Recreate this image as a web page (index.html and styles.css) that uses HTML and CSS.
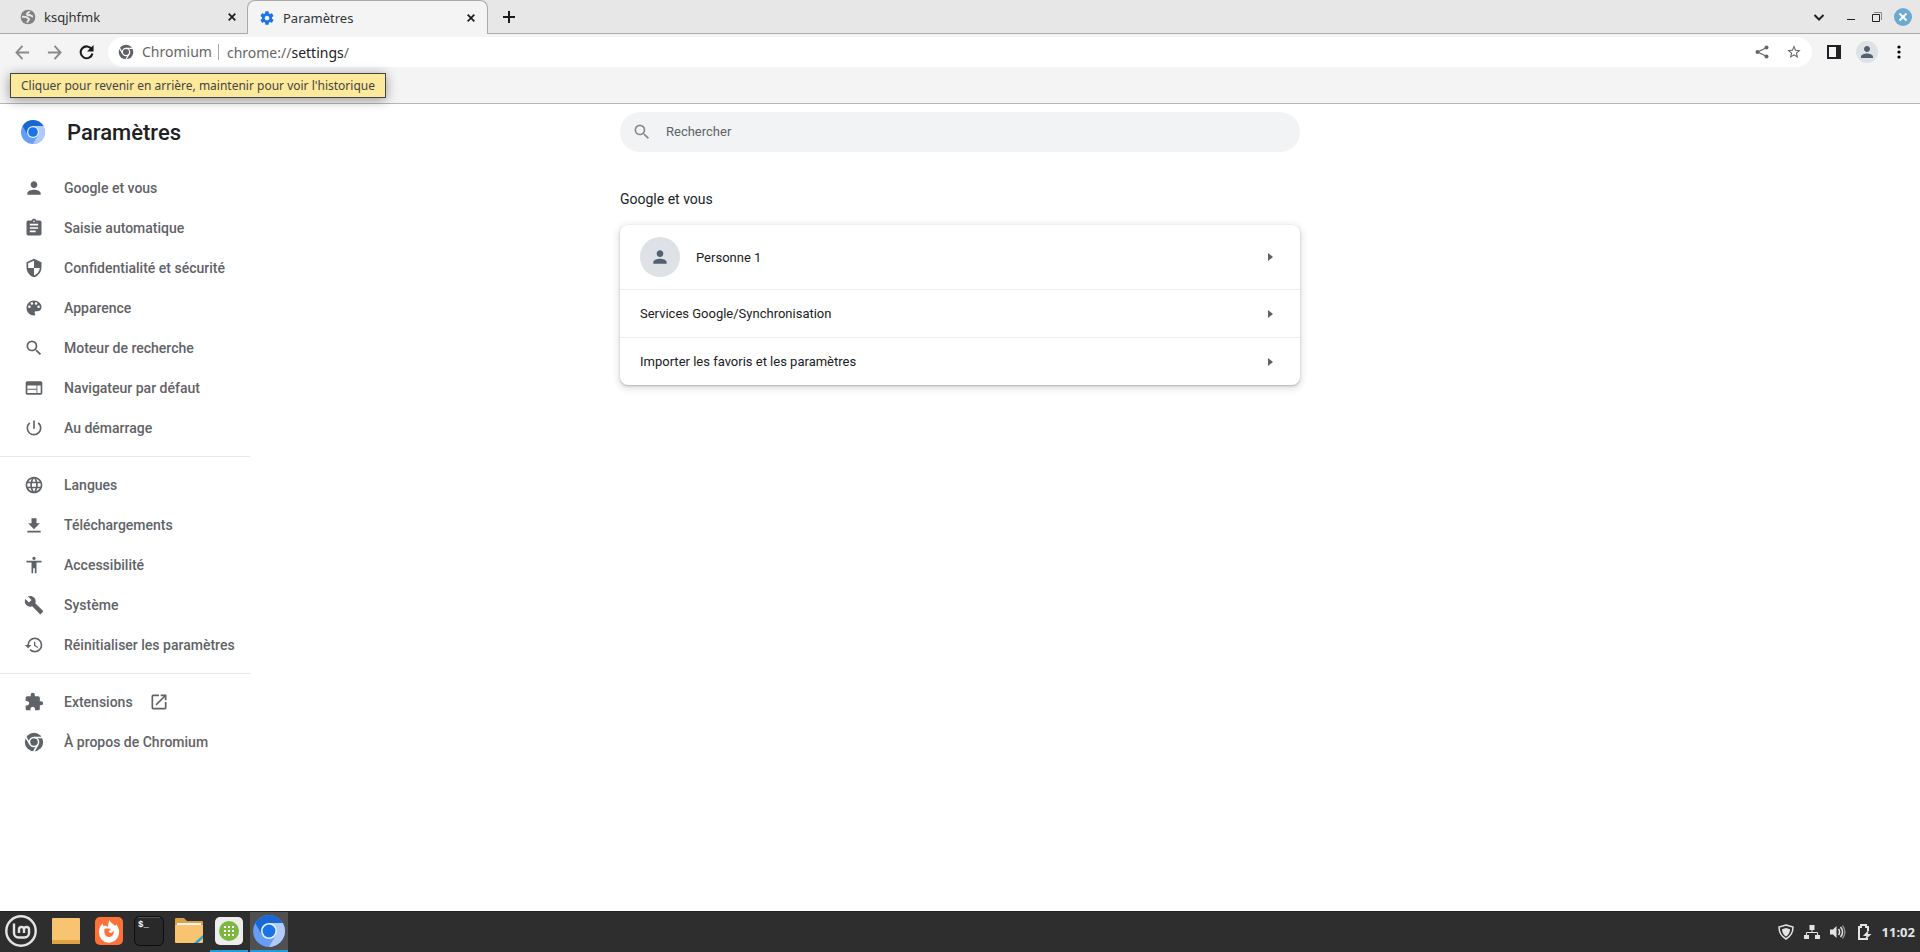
FILE: index.html
```html
<!DOCTYPE html>
<html lang="fr">
<head>
    <meta charset="UTF-8">
    <meta name="viewport" content="width=device-width, initial-scale=1.0">
    <title>Paramètres</title>
    <link rel="stylesheet" href="styles.css">
</head>
<body>

    <!-- shared icons -->
    <svg class="sprite" aria-hidden="true">
        <symbol id="i-close" viewBox="0 0 24 24"><path d="M4 4l16 16M20 4L4 20" fill="none" stroke="currentColor" stroke-width="4"/></symbol>
        <symbol id="i-person" viewBox="0 0 24 24"><path d="M12 12c2.210 0 4-1.790 4-4s-1.790-4-4-4-4 1.790-4 4 1.790 4 4 4zm0 2c-2.670 0-8 1.340-8 4v2h16v-2c0-2.660-5.330-4-8-4z"/></symbol>
        <symbol id="i-search" viewBox="0 0 24 24"><path d="M15.500 14h-.79l-.28-.27A6.470 6.470 0 0 0 16 9.500 6.500 6.500 0 1 0 9.500 16c1.610 0 3.090-.59 4.230-1.570l.27.28v.79l5 4.990L20.490 19l-4.990-5zm-6 0C7.010 14 5 11.990 5 9.500S7.010 5 9.500 5 14 7.010 14 9.500 11.990 14 9.500 14z"/></symbol>
        <symbol id="i-chrome" viewBox="0 0 24 24">
            <circle cx="12" cy="12" r="11"/>
            <circle cx="12" cy="12" r="5.500" fill="none" stroke="#fff" stroke-width="1.800"/>
            <path d="M12 6.500h10.500M7.200 14.700L2 5.800M16.800 14.700l-5.200 9" fill="none" stroke="#fff" stroke-width="1.800"/>
        </symbol>
        <symbol id="i-chromium" viewBox="0 0 24 24">
            <circle cx="12" cy="12" r="12" fill="#669df6"/>
            <path d="M12 6h10.390A12 12 0 0 1 12 24l5.200-9z" fill="#aecbfa"/>
            <path d="M1.610 6A12 12 0 0 1 22.390 6H12l-5.200 9z" fill="#1967d2"/>
            <circle cx="12" cy="12" r="6" fill="#e8f0fe"/>
            <circle cx="12" cy="12" r="4.800" fill="#1a73e8"/>
        </symbol>
    </svg>

    <header class="browser">
        <div class="tab-strip">
            <div class="tab">
                <svg class="favicon" viewBox="0 0 24 24"><circle cx="12" cy="12" r="11" fill="#808080"/><path d="M14 3.500c-.5 2-3.500 2-3.500 4 0 1.500 2 2 4 1.500 1.500 0 2 2 5 2.500M3 11.500c3 0 7-.5 8 1.500.8 1.500 2.500 1 2.500 2.500S11 17.500 11 20.500" fill="none" stroke="#e7e7e7" stroke-width="3"/></svg>
                <span class="tab-title">ksqjhfmk</span>
                <button class="tab-close" aria-label="Fermer"><svg><use href="#i-close"/></svg></button>
            </div>
            <div class="tab active">
                <svg class="favicon gear" viewBox="0 0 24 24"><path d="M19.430 12.980c.04-.32.07-.64.07-.98s-.03-.66-.07-.98l2.110-1.650c.19-.15.24-.42.12-.64l-2-3.460c-.12-.22-.39-.3-.61-.22l-2.490 1c-.52-.4-1.080-.73-1.690-.98l-.38-2.650A.488.488 0 0 0 14 2h-4c-.25 0-.46.18-.49.42l-.38 2.650c-.61.25-1.170.59-1.690.98l-2.490-1c-.23-.09-.49 0-.61.22l-2 3.460c-.13.22-.07.49.12.64l2.110 1.650c-.04.32-.07.65-.07.98s.03.66.07.98l-2.110 1.650c-.19.15-.24.42-.12.64l2 3.460c.12.22.39.3.61.22l2.490-1c.52.4 1.080.73 1.690.98l.38 2.650c.03.24.24.42.49.42h4c.25 0 .46-.18.49-.42l.38-2.650c.61-.25 1.170-.59 1.690-.98l2.490 1c.23.09.49 0 .61-.22l2-3.460c.12-.22.07-.49-.12-.64l-2.110-1.650zM12 15.500c-1.930 0-3.500-1.570-3.500-3.500s1.570-3.500 3.500-3.500 3.500 1.570 3.500 3.500-1.570 3.500-3.500 3.500z"/></svg>
                <span class="tab-title">Paramètres</span>
                <button class="tab-close" aria-label="Fermer"><svg><use href="#i-close"/></svg></button>
            </div>
            <button class="new-tab" aria-label="Nouvel onglet"><svg viewBox="0 0 12 12"><path d="M6 0v12M0 6h12" fill="none" stroke="#1a1a1a" stroke-width="2"/></svg></button>
            <div class="window-controls">
                <button class="win" aria-label="Rechercher dans les onglets"><svg viewBox="0 0 12 12"><path d="M1.500 4L6 8.500 10.500 4" fill="none" stroke="#222" stroke-width="2"/></svg></button>
                <button class="win" aria-label="Réduire"><svg viewBox="0 0 12 12"><path d="M2 8.500h8" stroke="#222"/></svg></button>
                <button class="win" aria-label="Restaurer"><svg viewBox="0 0 12 12"><path d="M3 1.500h7.500V9" fill="none" stroke="#888"/><path d="M1.500 3.500h7v7h-7z" fill="none" stroke="#222"/></svg></button>
                <button class="win win-close" aria-label="Fermer la fenêtre"><svg viewBox="0 0 12 12"><path d="M2.500 2.500l7 7M9.500 2.500l-7 7" stroke="#fff" stroke-width="2"/></svg></button>
            </div>
        </div>

        <div class="toolbar">
            <div class="nav-wrap">
                <button class="nav-btn" aria-label="Retour" aria-describedby="back-tip"><svg viewBox="0 0 16 16"><path d="M15 8H2M8 1L1.500 8 8 15" fill="none" stroke="#8a8a8a" stroke-width="2"/></svg></button>
                <span class="tooltip" id="back-tip" role="tooltip">Cliquer pour revenir en arrière, maintenir pour voir l'historique</span>
            </div>
            <button class="nav-btn" aria-label="Avancer"><svg viewBox="0 0 16 16"><path d="M1 8h13M8 1l6.500 7L8 15" fill="none" stroke="#8a8a8a" stroke-width="2"/></svg></button>
            <button class="nav-btn" aria-label="Actualiser"><svg viewBox="0 0 16 16"><path d="M13.500 4.500A6.300 6.300 0 1 0 14.300 9" fill="none" stroke="#1a1a1a" stroke-width="2.200"/><path d="M15.500 0v7h-7z" fill="#1a1a1a"/></svg></button>
            <div class="omnibox">
                <svg class="omni-logo"><use href="#i-chrome"/></svg>
                <span class="omni-name">Chromium</span>
                <span class="omni-url">chrome://<b>settings</b>/</span>
                <button class="omni-btn share" aria-label="Partager"><svg viewBox="0 0 16 16"><path d="M13 3.500L3.500 8l9.500 4.500" fill="none" stroke="#666" stroke-width="1.300"/><circle cx="12.500" cy="3.500" r="2" fill="#666"/><circle cx="3.500" cy="8" r="2" fill="#666"/><circle cx="12.500" cy="12.500" r="2" fill="#666"/></svg></button>
                <button class="omni-btn" aria-label="Ajouter aux favoris"><svg viewBox="0 0 24 24"><path fill="#666" d="M22 9.240l-7.190-.62L12 2 9.190 8.630 2 9.240l5.460 4.730L5.820 21 12 17.270 18.180 21l-1.630-7.030L22 9.240zM12 15.400l-3.760 2.270 1-4.280-3.320-2.880 4.380-.38L12 6.100l1.710 4.040 4.380.38-3.320 2.880 1 4.280L12 15.400z"/></svg></button>
            </div>
            <button class="tool-btn" aria-label="Panneau latéral"><svg viewBox="0 0 14 14"><path d="M1 1h12v12H1z" fill="none" stroke="#202124" stroke-width="2"/><path d="M9 1h4v12H9z" fill="#202124"/></svg></button>
            <button class="profile" aria-label="Profil"><svg><use href="#i-person"/></svg></button>
            <button class="tool-btn" aria-label="Menu"><svg viewBox="0 0 14 14"><circle cx="7" cy="2" r="1.600"/><circle cx="7" cy="7" r="1.600"/><circle cx="7" cy="12" r="1.600"/></svg></button>
        </div>
    </header>

    <main class="settings">
        <aside class="side">
            <div class="brand">
                <svg><use href="#i-chromium"/></svg>
                <h1>Paramètres</h1>
            </div>
            <nav class="menu">
                <a href="#"><svg><use href="#i-person"/></svg>Google et vous</a>
                <a href="#"><svg viewBox="0 0 24 24"><path d="M19 3h-4.180C14.400 1.840 13.300 1 12 1c-1.300 0-2.400.84-2.820 2H5c-1.100 0-2 .9-2 2v14c0 1.100.9 2 2 2h14c1.100 0 2-.9 2-2V5c0-1.100-.9-2-2-2zm-7 0c.55 0 1 .45 1 1s-.45 1-1 1-1-.45-1-1 .45-1 1-1zm2 14H7v-2h7v2zm3-4H7v-2h10v2zm0-4H7V7h10v2z"/></svg>Saisie automatique</a>
                <a href="#"><svg viewBox="0 0 24 24"><path d="M12 1L3 5v6c0 5.550 3.840 10.740 9 12 5.160-1.260 9-6.450 9-12V5l-9-4zm0 10.990h7c-.53 4.120-3.280 7.790-7 8.940V12H5V6.300l7-3.110v8.800z"/></svg>Confidentialité et sécurité</a>
                <a href="#"><svg viewBox="0 0 24 24"><path d="M12 3c-4.970 0-9 4.030-9 9s4.030 9 9 9c.83 0 1.500-.67 1.500-1.500 0-.39-.15-.74-.39-1.010-.23-.26-.38-.61-.38-.99 0-.83.67-1.500 1.500-1.500H16c2.760 0 5-2.240 5-5 0-4.420-4.030-8-9-8zm-5.500 9c-.83 0-1.500-.67-1.500-1.500S5.670 9 6.500 9 8 9.670 8 10.500 7.330 12 6.500 12zm3-4C8.670 8 8 7.330 8 6.500S8.670 5 9.500 5s1.500.67 1.500 1.500S10.330 8 9.500 8zm5 0c-.83 0-1.500-.67-1.500-1.500S13.670 5 14.500 5s1.500.67 1.500 1.500S15.330 8 14.500 8zm3 4c-.83 0-1.500-.67-1.500-1.500S16.670 9 17.500 9s1.500.67 1.500 1.500-.67 1.500-1.500 1.500z"/></svg>Apparence</a>
                <a href="#"><svg><use href="#i-search"/></svg>Moteur de recherche</a>
                <a href="#"><svg viewBox="0 0 24 24"><path d="M20 4H4c-1.100 0-1.990.9-1.990 2L2 18c0 1.100.9 2 2 2h16c1.100 0 2-.9 2-2V6c0-1.100-.9-2-2-2zm-5 14H4v-4h11v4zm0-5H4V9h11v4zm5 5h-4V9h4v9z"/></svg>Navigateur par défaut</a>
                <a href="#"><svg viewBox="0 0 24 24"><path d="M13 3h-2v10h2V3zm4.830 2.170l-1.420 1.420A6.920 6.920 0 0 1 19 12c0 3.870-3.130 7-7 7A6.995 6.995 0 0 1 7.580 6.580L6.170 5.170A8.932 8.932 0 0 0 3 12a9 9 0 0 0 18 0c0-2.740-1.230-5.180-3.170-6.830z"/></svg>Au démarrage</a>
                <hr>
                <a href="#"><svg viewBox="0 0 24 24"><path d="M11.990 2C6.470 2 2 6.480 2 12s4.470 10 9.990 10C17.520 22 22 17.520 22 12S17.520 2 11.990 2zm6.930 6h-2.950a15.650 15.650 0 0 0-1.380-3.560A8.030 8.030 0 0 1 18.920 8zM12 4.040c.83 1.200 1.480 2.530 1.910 3.960h-3.820c.43-1.430 1.080-2.760 1.910-3.960zM4.260 14C4.100 13.360 4 12.690 4 12s.1-1.360.26-2h3.380c-.08.66-.14 1.320-.14 2 0 .68.06 1.340.14 2H4.260zm.82 2h2.950c.32 1.250.78 2.450 1.380 3.560A7.987 7.987 0 0 1 5.080 16zm2.950-8H5.080a7.987 7.987 0 0 1 4.330-3.560A15.650 15.650 0 0 0 8.030 8zM12 19.960c-.83-1.200-1.480-2.530-1.910-3.960h3.820c-.43 1.430-1.080 2.760-1.910 3.960zM14.340 14H9.660c-.09-.66-.16-1.320-.16-2 0-.68.07-1.350.16-2h4.680c.09.65.16 1.320.16 2 0 .68-.07 1.340-.16 2zm.25 5.560c.6-1.110 1.060-2.310 1.380-3.560h2.950a8.030 8.030 0 0 1-4.330 3.560zM16.360 14c.08-.66.14-1.320.14-2 0-.68-.06-1.340-.14-2h3.380c.16.64.26 1.310.26 2s-.1 1.360-.26 2h-3.380z"/></svg>Langues</a>
                <a href="#"><svg viewBox="0 0 24 24"><path d="M19 10h-4V4H9v6H5l7 7 7-7zM4 19v2h16v-2H4z"/></svg>Téléchargements</a>
                <a href="#"><svg viewBox="0 0 24 24"><path d="M12 2c1.100 0 2 .9 2 2s-.9 2-2 2-2-.9-2-2 .9-2 2-2zm9 7h-6v13h-2v-6h-2v6H9V9H3V7h18v2z"/></svg>Accessibilité</a>
                <a href="#"><svg viewBox="0 0 24 24"><path d="M22.700 19l-9.100-9.100c.9-2.300.4-5-1.500-6.900-2-2-5-2.400-7.400-1.300L9 6 6 9 1.600 4.700C.4 7.100.9 10.100 2.900 12.100c1.900 1.900 4.600 2.400 6.900 1.500l9.100 9.100c.4.4 1 .4 1.400 0l2.300-2.300c.5-.4.5-1.100.1-1.400z"/></svg>Système</a>
                <a href="#"><svg viewBox="0 0 24 24"><path d="M13 3a9 9 0 0 0-9 9H1l3.890 3.890.07.14L9 12H6c0-3.870 3.130-7 7-7s7 3.130 7 7-3.130 7-7 7c-1.930 0-3.680-.79-4.940-2.060l-1.420 1.420A8.954 8.954 0 0 0 13 21a9 9 0 0 0 0-18zm-1 5v5l4.280 2.540.72-1.210-3.500-2.080V8H12z"/></svg>Réinitialiser les paramètres</a>
                <hr>
                <a href="#"><svg viewBox="0 0 24 24"><path d="M20.500 11H19V7c0-1.100-.9-2-2-2h-4V3.500a2.500 2.500 0 0 0-5 0V5H4c-1.100 0-1.990.9-1.990 2v3.800H3.500c1.490 0 2.700 1.210 2.700 2.700s-1.210 2.700-2.700 2.700H2V20c0 1.100.9 2 2 2h3.800v-1.500c0-1.490 1.210-2.700 2.700-2.700 1.490 0 2.700 1.210 2.700 2.700V22H17c1.100 0 2-.9 2-2v-4h1.500a2.500 2.500 0 0 0 0-5z"/></svg>Extensions<svg class="external" viewBox="0 0 24 24"><path d="M19 19H5V5h7V3H5a2 2 0 0 0-2 2v14a2 2 0 0 0 2 2h14c1.100 0 2-.9 2-2v-7h-2v7zM14 3v2h3.590l-9.830 9.830 1.410 1.410L19 6.410V10h2V3h-7z"/></svg></a>
                <a href="#"><svg><use href="#i-chrome"/></svg>À propos de Chromium</a>
            </nav>
        </aside>

        <div class="content">
            <label class="search">
                <svg><use href="#i-search"/></svg>
                <input type="search" placeholder="Rechercher" aria-label="Rechercher">
            </label>
            <h2>Google et vous</h2>
            <div class="card">
                <a class="row profile-row" href="#">
                    <span class="avatar"><svg><use href="#i-person"/></svg></span>
                    <span>Personne 1</span>
                    <i class="arrow"></i>
                </a>
                <a class="row" href="#"><span>Services Google/Synchronisation</span><i class="arrow"></i></a>
                <a class="row" href="#"><span>Importer les favoris et les paramètres</span><i class="arrow"></i></a>
            </div>
        </div>
    </main>

    <footer class="taskbar">
        <button class="task start" aria-label="Menu"><svg viewBox="0 0 32 32"><circle cx="16" cy="16" r="14.700" fill="none" stroke="#e4e4e4" stroke-width="2.400"/><path d="M9 8.500v9.500a4.500 4.500 0 0 0 4.500 4.500h6a4.500 4.500 0 0 0 4.500-4.500v-3.500a2.500 2.500 0 0 0-5 0V18M19 14.500a2.500 2.500 0 0 0-5 0V18" fill="none" stroke="#e4e4e4" stroke-width="2.400"/></svg></button>
        <button class="task desktop" aria-label="Bureau"><svg viewBox="0 0 32 32"><rect x="2" y="3" width="28" height="26" rx="1" fill="#f8c471"/><path d="M2 25h28v3a1 1 0 0 1-1 1H3a1 1 0 0 1-1-1z" fill="#e0a344"/></svg></button>
        <button class="task" aria-label="Firefox"><svg viewBox="0 0 32 32"><rect x="2" y="2" width="28" height="28" rx="5" fill="#ff7139"/><path d="M16.500 5c1 3 3 3 5 5.500 1 .4 1.500 0 2-1 2 3 3 6 2.500 9A10 10 0 0 1 6 17c0-3.500 1-6 3.500-8.500l1 2.500c2-.5 3.500 0 4.500 1 .5-3 .3-5 1.500-7z" fill="#fff"/><path d="M11.500 14c2-1 4 0 6-.5.500 1.500-1 2-2 3 1 2 4 2 5-1 1 4-1.500 6.500-4.500 6.500s-5.500-3.500-4.500-8z" fill="#ff7139"/></svg></button>
        <button class="task" aria-label="Terminal"><svg viewBox="0 0 32 32"><rect x="1.500" y="1.500" width="29" height="29" rx="5" fill="#292929" stroke="#0d0d0d"/><path d="M5 2.500h22" stroke="#555"/><text x="5" y="12" class="prompt">$_</text></svg></button>
        <button class="task" aria-label="Fichiers"><svg viewBox="0 0 32 32"><path d="M2 4a1 1 0 0 1 1-1h8l3 3h15a1 1 0 0 1 1 1v20H2z" fill="#d9a047"/><path d="M4 8h24v4H4z" fill="#f4f4f4"/><path d="M2 10h28v17a1 1 0 0 1-1 1H3a1 1 0 0 1-1-1z" fill="#f8c471"/><path d="M30 20v3l-5 5h-4z" fill="#2d9fd8"/></svg></button>
        <button class="task open" aria-label="Applications"><svg viewBox="0 0 32 32"><rect x="2" y="2" width="28" height="28" rx="5" fill="#ededed"/><circle cx="16" cy="16" r="10" fill="#7cb83e"/><path d="M11 12h10M11 16h10M11 20h10" stroke="#fff" stroke-width="2" stroke-dasharray="2 2"/></svg></button>
        <button class="task open current" aria-label="Chromium"><svg><use href="#i-chromium"/></svg></button>
        <div class="tray">
            <svg viewBox="0 0 16 16"><path d="M8 1l7 2c0 6-2.500 9.500-7 12-4.500-2.500-7-6-7-12z" fill="none" stroke="#e4e4e4" stroke-width="1.500"/><path d="M8 4l4 1.200c0 3.500-1.500 5.500-4 7.300-2.500-1.800-4-3.800-4-7.300z" fill="#e4e4e4"/></svg>
            <svg viewBox="0 0 16 16"><path d="M5.500 1h5v5h-5zM0 11h5v4H0zM11 11h5v4h-5z" fill="#e4e4e4"/><path d="M8 6v3M2.500 11V8.500h11V11" fill="none" stroke="#e4e4e4"/></svg>
            <svg viewBox="0 0 16 16"><path d="M0 5.500h3L6.500 2v12L3 10.500H0z" fill="#e4e4e4"/><path d="M8.500 5c1.500 2 1.500 4 0 6M10.500 3c2.500 3 2.500 7 0 10" fill="none" stroke="#e4e4e4" stroke-width="1.500"/><path d="M12.500 1.500c3 4 3 9 0 13" fill="none" stroke="#888" stroke-width="1.500"/></svg>
            <svg viewBox="0 0 16 16"><path d="M12 15H3V3h2V1h5v2h2v4" fill="none" stroke="#e4e4e4" stroke-width="2"/><path d="M12.500 6L7 12h3.500L9 16l6.500-6H12z" fill="#e4e4e4"/></svg>
            <time>11:02</time>
        </div>
    </footer>

</body>
</html>
```
FILE: styles.css
```css
* {
    box-sizing: border-box;
}

body {
    margin: 0;
    min-height: 100vh;
    display: flex;
    flex-direction: column;
    background: #fff;
    color: #202124;
    font-family: Roboto, sans-serif;
    font-size: 13px;
}

button {
    border: 0;
    padding: 0;
    background: none;
    display: flex;
    align-items: center;
    justify-content: center;
}

a {
    color: inherit;
    text-decoration: none;
}

svg {
    flex: none;
}

.sprite {
    position: absolute;
    width: 0;
    height: 0;
}

/* browser chrome */
.browser {
    padding-bottom: 33px;
    background: #f4f4f4;
    border-bottom: 1px solid #b6b6b6;
    font-family: "Noto Sans", sans-serif;
}

.tab-strip {
    display: flex;
    height: 34px;
    background: #e7e7e7;
    box-shadow: inset 0 -1px #aaa;
}

.tab {
    display: flex;
    align-items: center;
    width: 247px;
    padding: 0 9px 0 20px;
    font-size: 13px;
    color: #333;
}

.tab.active {
    width: 241px;
    padding: 0 10px 0 11px;
    background: #f4f4f4;
    border: 1px solid #aaa;
    border-bottom: 0;
    border-radius: 8px 8px 0 0;
}

.favicon {
    width: 16px;
    height: 16px;
    margin-right: 8px;
}

.gear {
    fill: #1a73e8;
}

.tab-title {
    flex: 1;
}

.tab-close {
    width: 12px;
    height: 12px;
    color: #1a1a1a;
}

.tab-close svg {
    width: 10px;
    height: 10px;
}

.new-tab {
    width: 42px;
}

.new-tab svg {
    width: 12px;
    height: 12px;
}

.window-controls {
    display: flex;
    align-items: center;
    gap: 8px;
    margin-left: auto;
    padding-right: 8px;
}

.win {
    width: 18px;
    height: 18px;
    border-radius: 50%;
}

.win:first-child {
    margin-right: 6px;
}

.win svg {
    width: 12px;
    height: 12px;
}

.win-close {
    background: #6aaad0;
}

.toolbar {
    display: flex;
    align-items: center;
    height: 36px;
    padding: 0 7px 0 8px;
}

.nav-wrap {
    position: relative;
}

.nav-btn {
    width: 28px;
    height: 28px;
    margin-right: 4px;
}

.nav-btn svg {
    width: 15px;
    height: 15px;
}

.tooltip {
    position: absolute;
    z-index: 1;
    top: 35px;
    left: 2px;
    padding: 0 10px;
    border: 1px solid #444;
    background: #fce99c;
    color: #444;
    font-size: 12px;
    line-height: 23px;
    white-space: nowrap;
    box-shadow: 0 2px 12px rgba(0, 0, 0, 0.4);
}

.omnibox {
    flex: 1;
    display: flex;
    align-items: center;
    height: 30px;
    margin-left: 4px;
    padding: 0 9px 0 10px;
    border-radius: 15px;
    background: #fff;
    color: #666;
    font-size: 14px;
}

.omni-logo {
    width: 16px;
    height: 16px;
    margin-right: 8px;
    fill: #5f6368;
}

.omni-name {
    padding-right: 6px;
    margin-right: 8px;
    border-right: 1px solid #aaa;
    line-height: 16px;
}

.omni-url b {
    font-weight: normal;
    color: #202124;
}

.omni-btn {
    width: 18px;
    height: 18px;
}

.share {
    margin: 0 14px 0 auto;
}

.omni-btn svg {
    width: 16px;
    height: 16px;
}

.tool-btn {
    width: 28px;
    height: 28px;
}

.omnibox + .tool-btn {
    margin: 0 8px;
}

.tool-btn svg {
    width: 14px;
    height: 14px;
}

.profile {
    width: 22px;
    height: 22px;
    margin-right: 7px;
    border-radius: 50%;
    background: #dee1e6;
}

.profile svg {
    width: 18px;
    height: 18px;
    fill: #535f73;
}

/* settings page */
.settings {
    flex: 1;
    display: grid;
    grid-template-columns: 1fr minmax(auto, 680px) 1fr;
}

.side {
    width: 250px;
}

.brand {
    display: flex;
    align-items: center;
    height: 56px;
    padding-left: 21px;
}

.brand svg {
    width: 24px;
    height: 24px;
    margin-right: 22px;
}

.brand h1 {
    margin: 0;
    font-size: 22px;
    font-weight: 500;
}

.menu {
    padding-top: 8px;
    color: #5f6368;
    fill: #5f6368;
}

.menu a {
    display: flex;
    align-items: center;
    height: 40px;
    padding-left: 24px;
    font-size: 14px;
    font-weight: 500;
}

.menu svg {
    width: 20px;
    height: 20px;
    margin-right: 20px;
}

.menu .external {
    margin: 0 0 0 16px;
}

.menu hr {
    margin: 8px 0;
    border: 0;
    border-top: 1px solid #e8e8e8;
}

.search {
    display: flex;
    align-items: center;
    height: 40px;
    margin-top: 8px;
    padding: 0 12px;
    border-radius: 20px;
    background: #f1f3f4;
}

.search svg {
    width: 20px;
    height: 20px;
    margin-right: 14px;
    fill: #8a8d90;
}

.search input {
    flex: 1;
    border: 0;
    padding: 0 0 1px;
    outline: 0;
    background: none;
    font: inherit;
}

.search input::placeholder {
    color: #5f6368;
}

.content h2 {
    margin: 36px 0 15px;
    font-size: 14px;
    font-weight: 400;
    line-height: 22px;
}

.card {
    border-radius: 8px;
    background: #fff;
    box-shadow: 0 1px 2px rgba(60, 64, 67, 0.3), 0 2px 6px 2px rgba(60, 64, 67, 0.15);
}

.row {
    display: flex;
    align-items: center;
    height: 48px;
    padding: 0 27px 0 20px;
    border-top: 1px solid #eee;
}

.profile-row {
    height: 64px;
    border-top: 0;
}

.avatar {
    display: flex;
    align-items: center;
    justify-content: center;
    width: 40px;
    height: 40px;
    margin-right: 16px;
    border-radius: 50%;
    background: #dee1e6;
}

.avatar svg {
    width: 20px;
    height: 20px;
    fill: #535f73;
}

.arrow {
    margin-left: auto;
    border: 4px solid transparent;
    border-left: 5px solid #5f6368;
    border-right: 0;
}

/* desktop panel */
.taskbar {
    display: flex;
    height: 41px;
    padding-left: 1px;
    background: #2e2e2e;
    border-top: 1px solid #222;
}

.task {
    width: 38px;
    margin-right: 2px;
    border-bottom: 2px solid transparent;
}

.task svg {
    width: 32px;
    height: 32px;
}

.start {
    width: 40px;
    margin-right: 6px;
}

.desktop {
    margin-right: 5px;
}

.open {
    border-bottom-color: #1f9ede;
}

.current {
    background: #505050;
}

.prompt {
    fill: #fff;
    font: bold 9px "Liberation Mono", monospace;
}

.tray {
    display: flex;
    align-items: center;
    gap: 10px;
    margin-left: auto;
    padding-right: 5px;
    color: #e4e4e4;
    font: bold 13px "Noto Sans", sans-serif;
}

.tray svg {
    width: 16px;
    height: 16px;
}
```
